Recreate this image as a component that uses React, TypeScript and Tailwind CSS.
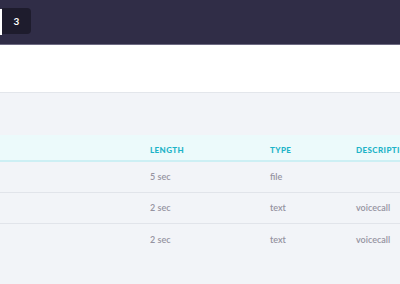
import React from 'react';

const rows = [
  { length: '5 sec', type: 'file', description: '' },
  { length: '2 sec', type: 'text', description: 'voicecall' },
  { length: '2 sec', type: 'text', description: 'voicecall' },
];

function App() {
  return (
    <div className="w-[400px] h-[284px] overflow-hidden bg-[#f2f4f8] font-['Lato',sans-serif]">
      {/* Top bar */}
      <header className="h-[45px] bg-[#302d47] border-b border-[#6d6a82] flex items-start pt-[8px]">
        <div className="w-[2px] h-[26px] mt-[1px] bg-white" />
        <button className="w-[29px] h-[26px] rounded-r-[4px] bg-[#1e1c2d] text-white text-[10px] font-bold flex items-center justify-center">
          3
        </button>
      </header>

      {/* Toolbar area */}
      <div className="h-[48px] bg-white border-b border-[#e3e6eb]" />

      {/* Table */}
      <div className="pt-[42px]">
        <div className="grid grid-cols-[150px_120px_86px_44px] h-[27px] pt-[5px] items-center bg-[#ecfafb] border-b-2 border-[#cdeff4] text-[8px] font-black tracking-[0.05em] text-[#1db4c8] whitespace-nowrap">
          <span />
          <span>LENGTH</span>
          <span>TYPE</span>
          <span className="overflow-hidden">DESCRIPTION</span>
        </div>
        {rows.map((row, i) => (
          <div
            key={i}
            className={`grid grid-cols-[150px_120px_86px_44px] h-[31px] items-center text-[9px] font-semibold text-[#9593a1] ${
              i < rows.length - 1 ? 'border-b border-[#e1e4ea]' : ''
            }`}
          >
            <span />
            <span>{row.length}</span>
            <span>{row.type}</span>
            <span>{row.description}</span>
          </div>
        ))}
      </div>
    </div>
  );
}

export default App;
